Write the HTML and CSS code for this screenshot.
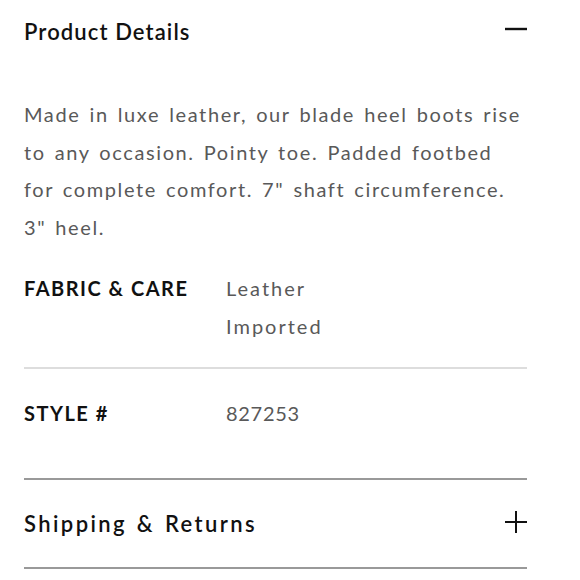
FILE: index.html
```html
<!DOCTYPE html>
<html lang="en">
<head>
<meta charset="utf-8">
<title>Product Details</title>
<link rel="stylesheet" href="styles.css">
</head>
<body>
<div class="accordion">
  <section class="item open">
    <div class="head">
      <h2 class="title">Product Details</h2>
      <svg class="icon" width="22" height="22" viewBox="0 0 22 22" aria-hidden="true"><path d="M0 11H22" stroke="#111" stroke-width="2.4" fill="none"/></svg>
    </div>
    <div class="body">
      <p class="desc">Made in luxe leather, our blade heel boots rise to any occasion. Pointy toe. Padded footbed for complete comfort. 7" shaft circumference. 3" heel.</p>
      <div class="spec">
        <div class="label">FABRIC &amp; CARE</div>
        <div class="values"><div>Leather</div><div>Imported</div></div>
      </div>
      <div class="spec last">
        <div class="label">STYLE #</div>
        <div class="values"><div class="num">827253</div></div>
      </div>
    </div>
  </section>
  <section class="item">
    <div class="head closed">
      <h2 class="title wide">Shipping &amp; Returns</h2>
      <svg class="icon" width="22" height="22" viewBox="0 0 22 22" aria-hidden="true"><path d="M0 11H22M11 0V22" stroke="#111" stroke-width="2" fill="none"/></svg>
    </div>
  </section>
</div>
</body>
</html>
```
FILE: styles.css
```css
* { box-sizing: border-box; }
html, body { margin: 0; padding: 0; background: #fff; }
body {
  font-family: "Lato", "Open Sans", sans-serif;
  color: #111;
}
.accordion {
  width: 503px;
  margin-left: 24px;
}
.item {
  border-bottom: 2px solid #999;
}
.head {
  height: 64px;
  display: flex;
  align-items: center;
  justify-content: space-between;
}
.head.closed {
  height: 87px;
  padding-top: 2px;
}
.title {
  margin: 0;
  font-size: 22px;
  font-weight: 600;
  letter-spacing: 1.1px;
  line-height: 30px;
  color: #111;
}
.title.wide {
  letter-spacing: 2.4px;
  word-spacing: 2px;
}
.icon { display: block; flex: none; }
.head .icon { margin-top: -6px; }
.head.closed .icon { margin-top: -4px; }
.body {
  padding-top: 32px;
  padding-bottom: 46px;
}
.desc {
  margin: 0;
  font-size: 20px;
  line-height: 37.7px;
  letter-spacing: 1.6px;
  word-spacing: 2.4px;
  color: #595959;
  width: 503px;
}
.spec {
  display: flex;
  font-size: 20px;
  line-height: 38px;
  padding-top: 22px;
  padding-bottom: 22px;
  border-bottom: 2px solid #ddd;
}
.spec.last {
  padding-top: 25px;
  padding-bottom: 0;
  border-bottom: 0;
}
.label {
  width: 202px;
  font-weight: 700;
  letter-spacing: 1.5px;
  color: #111;
}
.values {
  color: #595959;
  letter-spacing: 2px;
}
.values .num { letter-spacing: 0.7px; }
```
